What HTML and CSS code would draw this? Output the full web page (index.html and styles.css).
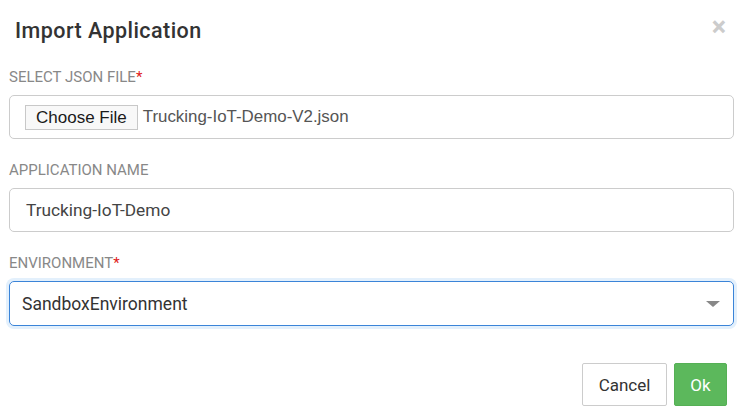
FILE: index.html
```html
<!DOCTYPE html>
<html>
<head>
<meta charset="utf-8">
<link rel="stylesheet" href="styles.css">
</head>
<body>
<div class="modal">
  <div class="header">
    <h4 class="title">Import Application</h4>
    <span class="close">&times;</span>
  </div>
  <div class="body">
    <div class="field">
      <label class="label">SELECT JSON FILE<span class="req">*</span></label>
      <div class="control file">
        <span class="choose">Choose File</span>
        <span class="fname">Trucking-IoT-Demo-V2.json</span>
      </div>
    </div>
    <div class="field">
      <label class="label">APPLICATION NAME</label>
      <div class="control text">Trucking-IoT-Demo</div>
    </div>
    <div class="field">
      <label class="label">ENVIRONMENT<span class="req">*</span></label>
      <div class="control select">
        <span>SandboxEnvironment</span>
        <span class="caret"></span>
      </div>
    </div>
  </div>
  <div class="footer">
    <button class="btn cancel">Cancel</button>
    <button class="btn ok">Ok</button>
  </div>
</div>
</body>
</html>
```
FILE: styles.css
```css
html, body {
  margin: 0;
  padding: 0;
  background: #fff;
  font-family: Roboto, "Liberation Sans", sans-serif;
}
.modal {
  width: 740px;
  height: 419px;
  box-sizing: border-box;
  padding: 0 6px 0 9px;
}
.header {
  display: flex;
  justify-content: space-between;
  align-items: flex-start;
  height: 68px;
}
.title {
  margin: 17px 0 0 6px;
  font-size: 21.5px;
  letter-spacing: 0.45px;
  font-weight: 500;
  color: #333;
  line-height: 28px;
}
.close {
  margin: 12px 8px 0 0;
  font-size: 27px;
  font-weight: 700;
  color: #ccc;
  line-height: 30px;
}
.field {
  margin-bottom: 22px;
}
.field:last-child {
  margin-bottom: 0;
}
.label {
  display: block;
  font-size: 15px;
  color: #888;
  line-height: 18px;
  margin-bottom: 9px;
}
.req {
  color: #e02020;
}
.control {
  height: 44px;
  box-sizing: border-box;
  border: 1px solid #ccc;
  border-radius: 5px;
  display: flex;
  align-items: center;
  font-size: 17.3px;
  color: #333;
}
.file {
  padding-left: 15px;
}
.choose {
  font-family: "Liberation Sans", Arial, sans-serif;
  font-size: 17px;
  border: 1px solid #c8c8c8;
  background: #f8f8f8;
  color: #1a1a1a;
  height: 25px;
  line-height: 23px;
  padding: 0 10px;
  box-sizing: border-box;
  margin-right: 5px;
}
.fname {
  font-family: "Liberation Sans", Arial, sans-serif;
  font-size: 16.9px;
  color: #555;
}
.text {
  padding-left: 16px;
  color: #444;
}
.select {
  height: 45px;
  font-size: 17.5px;
  border-color: #3b84d8;
  box-shadow: 0 0 0 3px #e3f0fc;
  justify-content: space-between;
  padding: 0 13px 0 12px;
}
.caret {
  width: 0;
  height: 0;
  border-left: 7px solid transparent;
  border-right: 7px solid transparent;
  border-top: 6px solid #888;
}
.footer {
  display: flex;
  justify-content: flex-end;
  gap: 7px;
  padding: 37px 7px 0 0;
}
.btn {
  height: 43px;
  font-family: Roboto, "Liberation Sans", sans-serif;
  font-size: 17px;
  border-radius: 2px;
  cursor: pointer;
}
.cancel {
  width: 85px;
  background: #fff;
  border: 1px solid #ccc;
  color: #333;
}
.ok {
  width: 53px;
  background: #5cb85c;
  border: 1px solid #55b055;
  color: #fff;
}
```
